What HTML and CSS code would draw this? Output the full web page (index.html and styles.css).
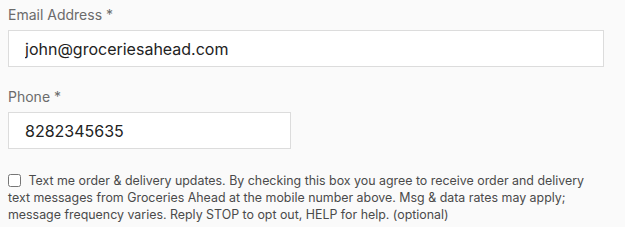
FILE: index.html
```html
<!DOCTYPE html>
<html lang="en">
<head>
  <meta charset="UTF-8" />
  <title>Contact details</title>
  <link rel="stylesheet" href="styles.css">
</head>
<body>
  <form class="contact-form">
    <div class="field">
      <label class="field-label" for="email">Email Address *</label>
      <input class="field-input" id="email" type="email" value="john@groceriesahead.com">
    </div>

    <div class="field">
      <label class="field-label" for="phone">Phone *</label>
      <input class="field-input field-input--short" id="phone" type="tel" value="8282345635">
    </div>

    <label class="sms-optin">
      <input type="checkbox" class="sms-check">
      <span>Text me order &amp; delivery updates. By checking this box you agree to receive order and delivery text messages from Groceries Ahead at the mobile number above. Msg &amp; data rates may apply; message frequency varies. Reply STOP to opt out, HELP for help. (optional)</span>
    </label>
  </form>
</body>
</html>
```

FILE: styles.css
```css
* {
  margin: 0;
  padding: 0;
  box-sizing: border-box;
}

body {
  font-family: Inter, 'Noto Sans', sans-serif;
  background-color: #fafafa;
  color: #333;
}

.contact-form {
  padding: 6px 21px 0 8px;
  display: flex;
  flex-direction: column;
}

.field {
  display: flex;
  flex-direction: column;
  margin-bottom: 21px;
}

.field-label {
  font-size: 14px;
  line-height: 18px;
  color: #6b6b6b;
  margin-bottom: 6px;
}

.field-input {
  width: 100%;
  height: 37px;
  padding: 0 16px;
  font-family: inherit;
  font-size: 16px;
  color: #222;
  background: #fff;
  border: 1px solid #dcdcdc;
  border-radius: 0;
  outline: none;
}

.field-input--short {
  width: 283px;
}

.sms-optin {
  display: block;
  font-size: 12.4px;
  line-height: 17px;
  color: #4a4a4a;
  padding-top: 2px;
}

.sms-check {
  width: 13px;
  height: 13px;
  margin: 0 4px 0 0;
  vertical-align: -2px;
}
```
